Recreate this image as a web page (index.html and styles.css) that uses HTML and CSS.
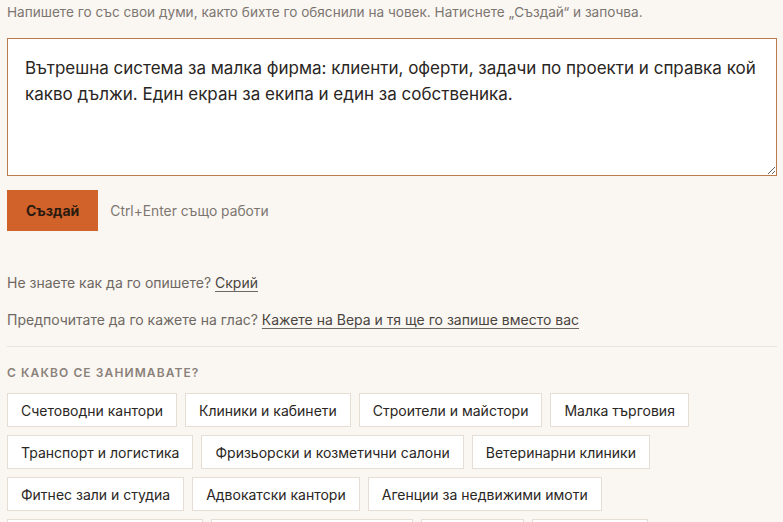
FILE: index.html
```html
<!DOCTYPE html>
<html lang="bg">

<head>
    <meta charset="UTF-8">
    <meta name="viewport" content="width=device-width, initial-scale=1.0">
    <title>Създай</title>
    <link rel="stylesheet" href="styles.css">
</head>

<body>

    <div class="page">
        <p class="lead">Напишете го със свои думи, както бихте го обяснили на човек. Натиснете „Създай“ и започва.</p>

        <textarea class="prompt" id="prompt">Вътрешна система за малка фирма: клиенти, оферти, задачи по проекти и справка кой какво дължи. Един екран за екипа и един за собственика.</textarea>

        <div class="actions">
            <button class="create">Създай</button>
            <span class="hint">Ctrl+Enter също работи</span>
        </div>

        <p class="note">Не знаете как да го опишете? <a href="#">Скрий</a></p>
        <p class="note">Предпочитате да го кажете на глас? <a href="#">Кажете на Вера и тя ще го запише вместо вас</a></p>

        <hr class="divider">

        <h3 class="section-title">С какво се занимавате?</h3>
        <div class="chips">
            <button class="chip">Счетоводни кантори</button>
            <button class="chip">Клиники и кабинети</button>
            <button class="chip">Строители и майстори</button>
            <button class="chip">Малка търговия</button>
            <button class="chip">Транспорт и логистика</button>
            <button class="chip">Фризьорски и козметични салони</button>
            <button class="chip">Ветеринарни клиники</button>
            <button class="chip">Фитнес зали и студиа</button>
            <button class="chip">Адвокатски кантори</button>
            <button class="chip">Агенции за недвижими имоти</button>
            <button class="chip">Ресторанти и заведения</button>
            <button class="chip">Образователни центрове</button>
            <button class="chip">Печатници</button>
            <button class="chip">Автосервизи</button>
        </div>
    </div>

    <script>
        const prompt = document.getElementById('prompt');
        prompt.focus();
        prompt.setSelectionRange(prompt.value.length, prompt.value.length);
    </script>

</body>

</html>
```

FILE: styles.css
```css
body {
    background-color: #faf7f3;
    font-family: Inter, "Noto Sans", sans-serif;
    margin: 0;
    padding: 0;
    color: #2a2623;
}

.page {
    padding: 2px 6px 0 7px;
}

.lead {
    margin: 0;
    font-size: 13.6px;
    line-height: 20px;
    color: #7d7670;
}

.prompt {
    display: block;
    box-sizing: border-box;
    width: 100%;
    height: 138px;
    margin-top: 16px;
    padding: 16px 17px;
    font-family: inherit;
    font-size: 17px;
    line-height: 26px;
    color: #2a2623;
    background-color: #ffffff;
    border: 1px solid #b97c4e;
    border-radius: 0;
    outline: none;
    resize: vertical;
    caret-color: #2a2623;
}

.actions {
    display: flex;
    align-items: center;
    gap: 12px;
    margin-top: 14px;
}

.create {
    height: 41px;
    padding: 0 19px;
    font-family: inherit;
    font-size: 14px;
    font-weight: 700;
    color: #2a1a10;
    background-color: #d0622a;
    border: none;
    cursor: pointer;
}

.hint {
    font-size: 13.8px;
    color: #7d7670;
}

.note {
    margin: 0;
    font-size: 14px;
    line-height: 20px;
    color: #6f6862;
}

.actions + .note {
    margin-top: 42px;
}

.note + .note {
    margin-top: 17px;
}

.note a {
    color: #4a443f;
    text-decoration: underline;
    text-underline-offset: 3px;
    text-decoration-color: #6f6862;
}

.divider {
    margin: 16px 0 0;
    border: none;
    border-top: 1px solid #ebe4dd;
}

.section-title {
    margin: 18px 0 0;
    font-size: 12px;
    font-weight: 600;
    letter-spacing: 1.1px;
    text-transform: uppercase;
    color: #8a817a;
}

.chips {
    display: flex;
    flex-wrap: wrap;
    gap: 8px;
    margin-top: 13px;
}

.chip {
    height: 34px;
    padding: 0 13px;
    font-family: inherit;
    font-size: 14px;
    color: #2a2623;
    background-color: #ffffff;
    border: 1px solid #e6ddd4;
    cursor: pointer;
}
```
